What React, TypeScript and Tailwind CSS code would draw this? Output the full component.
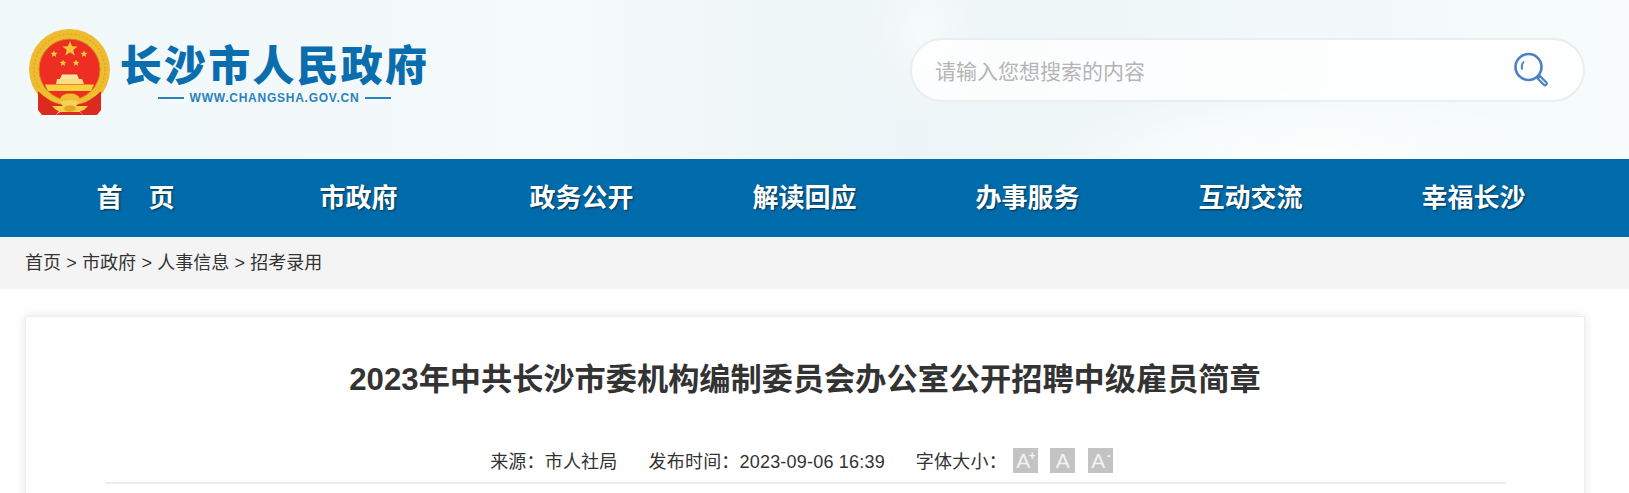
const navItems = ['首　页', '市政府', '政务公开', '解读回应', '办事服务', '互动交流', '幸福长沙'];

function Star({ x, y, r, fill = '#f7d23e' }: { x: number; y: number; r: number; fill?: string }) {
    const points = Array.from({ length: 10 }, (_, i) => {
        const radius = i % 2 === 0 ? r : r * 0.42;
        const angle = -Math.PI / 2 + (i * Math.PI) / 5;
        return `${x + radius * Math.cos(angle)},${y + radius * Math.sin(angle)}`;
    }).join(' ');
    return <polygon points={points} fill={fill} />;
}

function Emblem() {
    return (
        <svg viewBox="29 29 81 86" className="w-[81px] h-[86px] shrink-0">
            {/* ring and disc */}
            <circle cx="69.5" cy="69.5" r="40.5" fill="#efbb30" />
            <circle cx="69.5" cy="69.5" r="35.5" fill="none" stroke="#e2a622" strokeWidth="1.5" strokeDasharray="2 2" />
            <circle cx="69.5" cy="69.5" r="30.5" fill="#ee2e22" stroke="#c98a1c" strokeWidth="1" />
            {/* stars */}
            <Star x={70} y={49} r={8} fill="#f3c63a" />
            <Star x={54} y={54} r={3.8} />
            <Star x={84} y={54} r={3.8} />
            <Star x={63} y={63} r={3.6} />
            <Star x={76} y={63} r={3.6} />
            {/* gate */}
            <path d="M62 74.5 H77 L79 79 H60 Z" fill="#fbe4a0" />
            <path d="M57 79 H82 L84 84 H56 Z" fill="#f9dc84" />
            <path d="M45 84.5 H94 L91 91 H48 Z" fill="#f8cf3c" />
            {/* drapes */}
            <path d="M38 91 Q50 103 63 105 L60 110 L56 115 H42 L38 110 Z" fill="#dd2a1f" />
            <path d="M101 91 Q89 103 76 105 L79 110 L83 115 H97 L101 110 Z" fill="#dd2a1f" />
            <path d="M60 112 L80 112 L83 115 H56 Z" fill="#dd2a1f" />
            {/* knots */}
            <path d="M37 88 Q50 101 62 102" fill="none" stroke="#f0c02f" strokeWidth="2.5" />
            <path d="M102 88 Q89 101 77 102" fill="none" stroke="#f0c02f" strokeWidth="2.5" />
            <ellipse cx="70" cy="98.5" rx="9.5" ry="5" fill="#f0bf30" />
            <path d="M60 102 Q70 98 79 102 L76 106 H63 Z" fill="#f6d25a" />
            <path d="M52 106 L88 106 L84 110 L78 112 H61 L56 110 Z" fill="#f5cc42" />
            <ellipse cx="70" cy="108.5" rx="6" ry="3.2" fill="#e3a823" />
        </svg>
    );
}

function SearchGlass() {
    return (
        <svg viewBox="0 0 36 36" className="w-9 h-9">
            <circle cx="14.5" cy="15" r="13" fill="none" stroke="#4b81c4" strokeWidth="2.6" />
            <path d="M8 17 A7.5 7.5 0 0 1 9.5 10" fill="none" stroke="#4b81c4" strokeWidth="1.8" strokeLinecap="round" />
            <path d="M25 25.5 L31 31.5" stroke="#4b81c4" strokeWidth="5.5" strokeLinecap="round" />
            <path d="M26 26.5 L31 31.5" stroke="#dbe7f5" strokeWidth="1.6" strokeLinecap="round" />
        </svg>
    );
}

function SizeButton({ mark }: { mark?: string }) {
    return (
        <span className="relative flex items-center justify-center w-[25px] h-[25px] bg-[#c3c3c3] text-[#f3f3f3] text-[21px] leading-none">
            <span className={mark ? '-ml-1' : ''}>A</span>
            {mark && <span className="absolute right-[2px] top-[2px] text-[12px] leading-none font-bold">{mark}</span>}
        </span>
    );
}

export default function App() {
    return (
        <div className="h-[493px] overflow-hidden bg-white font-['Liberation_Sans','Noto_Sans_CJK_SC',sans-serif] text-[#333]">
            <header className="h-[159px] flex items-start justify-between pl-[29px] pr-11 bg-[radial-gradient(ellipse_280px_75px_at_1310px_165px,rgba(255,255,255,1),transparent),radial-gradient(ellipse_70px_100px_at_925px_30px,rgba(255,255,255,0.6),transparent),linear-gradient(90deg,#f0f8fa_0%,#f5fafb_35%,#ebf4f6_56%,#f1f8f9_75%,#f7fbfc_100%)]">
                <div className="flex items-start gap-[11px] pt-[29px]">
                    <Emblem />
                    <div className="flex flex-col items-center pt-[10px] w-[307px]">
                        <div className="text-[42px] leading-[48px] font-black tracking-[2.2px] whitespace-nowrap text-[#0a6dae] font-['Noto_Sans_CJK_SC',sans-serif]">
                            长沙市人民政府
                        </div>
                        <div className="flex items-center gap-[6px] mt-[3px] text-[#2a82bd]">
                            <span className="w-[26px] h-[2px] bg-[#2a82bd]" />
                            <span className="text-[12px] leading-4 font-bold tracking-[0.75px] whitespace-nowrap">WWW.CHANGSHA.GOV.CN</span>
                            <span className="w-[26px] h-[2px] bg-[#2a82bd]" />
                        </div>
                    </div>
                </div>
                <div className="mt-[38px] w-[675px] h-[64px] rounded-full border-2 border-[#e9eef0] bg-white/80 flex items-center justify-between pl-[23px] pr-[33px]">
                    <span className="pt-[3px] text-[21px] text-[#b5b5b5]">请输入您想搜索的内容</span>
                    <SearchGlass />
                </div>
            </header>

            <nav className="h-[78px] bg-[#006bab] pl-[24px] pr-[44px] grid grid-cols-7">
                {navItems.map((item) => (
                    <a key={item} className="flex items-center justify-center text-white text-[26px] font-bold [text-shadow:1px_1px_2px_rgba(0,0,0,0.55)]">
                        {item}
                    </a>
                ))}
            </nav>

            <div className="h-[52px] bg-[#f4f4f4] px-[25px] flex items-center text-[18px] [word-spacing:0.3px]">首页 &gt; 市政府 &gt; 人事信息 &gt; 招考录用</div>

            <main className="mt-[27px] mx-[25px] w-[1560px] h-[300px] bg-white border border-[#eee] shadow-[0_0_10px_rgba(0,0,0,0.1)] px-[79px]">
                <h1 className="pt-[38px] text-center text-[31.2px] leading-[50px] font-bold">2023年中共长沙市委机构编制委员会办公室公开招聘中级雇员简章</h1>
                <div className="mt-[43px] h-[36px] pb-[9px] pr-[7px] flex items-center justify-center border-b-2 border-[#ececec] text-[18px] leading-[25px] tracking-[0.2px]">
                    <span className="pt-[3px]">来源：市人社局</span>
                    <span className="pt-[3px] ml-[31px]">发布时间：2023-09-06 16:39</span>
                    <span className="pt-[3px] ml-[31px]">字体大小：</span>
                    <span className="flex gap-[12.5px] ml-[6px]">
                        <SizeButton mark="+" />
                        <SizeButton />
                        <SizeButton mark="-" />
                    </span>
                </div>
            </main>
        </div>
    );
}
